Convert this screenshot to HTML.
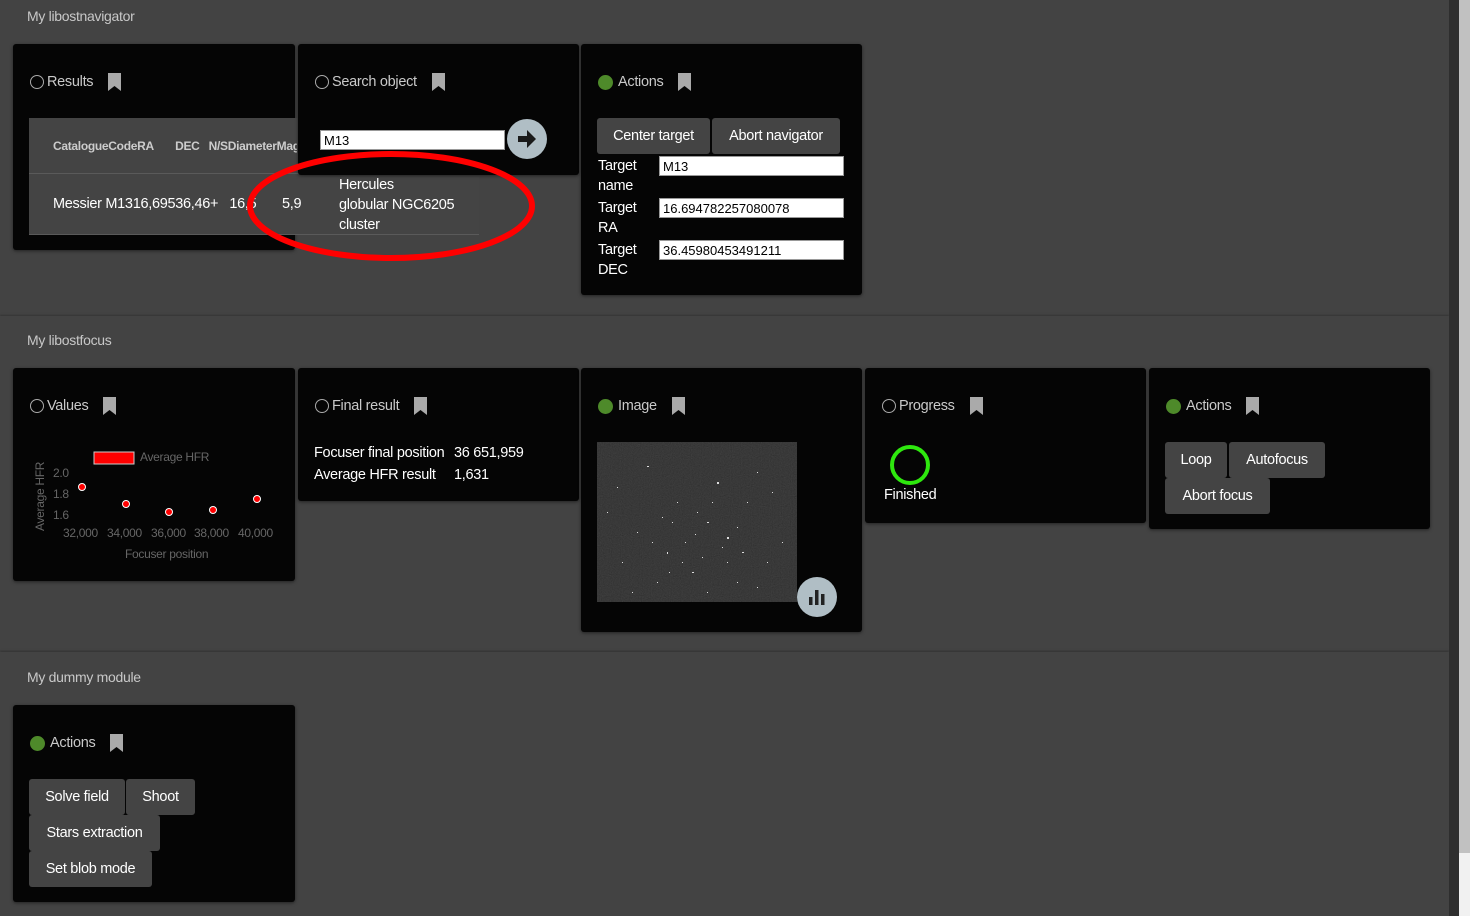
<!DOCTYPE html>
<html><head><meta charset="utf-8">
<style>
*{box-sizing:border-box;margin:0;padding:0}
html,body{width:1470px;height:916px;overflow:hidden;background:#434343;font-family:"Liberation Sans",sans-serif;color:#fff;letter-spacing:-0.3px}
.abs{position:absolute}
.sec{position:absolute;left:0;width:1449px;background:#434343}
.strip{position:absolute;left:1449px;top:0;width:10px;height:916px;background:#2e2e2e}
.sbt{position:absolute;left:1459px;top:0;width:11px;height:916px;background:#f1f1f1}
.sb{position:absolute;left:1459px;top:0;width:11px;height:853px;background:#c1c1c1}
.title{position:absolute;left:27px;font-size:14px;color:#c8c8c8}
.card{position:absolute;background:#050505;border-radius:3px;box-shadow:0 1px 3px rgba(0,0,0,.5)}
.hd{position:absolute;left:17px;top:30px;height:16px;display:flex;align-items:center;font-size:14.5px;color:#c9c9c9}
.dot{width:14px;height:14px;border-radius:50%;border:1px solid #aaa;margin-right:3px}
.dot.g{background:#4e8a2a;border-color:#4e8a2a;width:15px;height:15px;margin-right:5px}
.bm{margin-left:14px;width:15px;height:18px}
.btn{position:absolute;background:#444;border-radius:3px;font-size:14.5px;color:#fff;height:36px;line-height:37px;text-align:center;font-weight:500}
input{position:absolute;background:#fff;border:1px solid #999;font-family:"Liberation Sans",sans-serif;font-size:13px;color:#000;padding-left:3px;height:20px}
.lbl{position:absolute;font-size:14.5px;line-height:20px;color:#fff}
</style></head><body>
<div class="sec" style="top:0;height:314px"></div>
<div class="sec" style="top:316px;height:334px;box-shadow:0 -1px 2px rgba(0,0,0,.25)"></div>
<div class="sec" style="top:652px;height:264px;box-shadow:0 -1px 2px rgba(0,0,0,.25)"></div>
<div class="strip"></div><div class="sbt"></div><div class="sb"></div>

<div class="title" style="top:8px">My libostnavigator</div>
<div class="title" style="top:332px">My libostfocus</div>
<div class="title" style="top:669px">My dummy module</div>

<svg width="0" height="0" style="position:absolute"><defs><symbol id="bm" viewBox="0 0 15 18"><path d="M1 0H14V18L7.5 13L1 18Z" fill="#aaa"/></symbol></defs></svg>

<!-- Results -->
<div class="card" style="left:13px;top:44px;width:282px;height:206px">
 <div class="hd"><div class="dot"></div>Results<svg class="bm"><use href="#bm"/></svg></div>
</div>
<div class="abs" style="left:29px;top:118px;width:450px;height:117px;background:#444;border-bottom:1px solid #5a5a5a"></div>
<div class="abs" style="left:29px;top:173px;width:450px;height:1px;background:#5a5a5a"></div>
<div class="abs" style="left:53px;top:139px;font-size:12px;color:#ccc;font-weight:bold;white-space:nowrap;width:244px;overflow:hidden">CatalogueCodeRA&nbsp;&nbsp;&nbsp;&nbsp;&nbsp;&nbsp;&nbsp;DEC&nbsp;&nbsp;&nbsp;N/SDiameterMagnitude</div>
<div class="abs" style="left:53px;top:196px;font-size:14.5px">Messier M1316,69536,46+&nbsp;&nbsp;&nbsp;16,5</div>
<div class="abs" style="left:282px;top:196px;font-size:14.5px">5,9</div>
<div class="abs" style="left:339px;top:175px;font-size:14.5px;line-height:20px">Hercules<br>globular NGC6205<br>cluster</div>

<!-- Search -->
<div class="card" style="left:298px;top:44px;width:281px;height:131px">
 <div class="hd"><div class="dot"></div>Search object<svg class="bm"><use href="#bm"/></svg></div>
 <input value="M13" style="left:22px;top:86px;width:185px">
 <svg class="abs" style="left:209px;top:75px" width="40" height="40"><circle cx="20" cy="20" r="20" fill="#b0bec5"/><path d="M11 17h9v-6l9 9-9 9v-6h-9z" fill="#1a1a1a"/></svg>
</div>
<svg class="abs" style="left:240px;top:145px" width="310" height="125"><ellipse cx="151" cy="61" rx="141" ry="52" fill="none" stroke="#f00" stroke-width="6"/></svg>

<!-- Actions nav -->
<div class="card" style="left:581px;top:44px;width:281px;height:251px">
 <div class="hd"><div class="dot g"></div>Actions<svg class="bm"><use href="#bm"/></svg></div>
 <div class="btn" style="left:16px;top:74px;width:113px">Center target</div>
 <div class="btn" style="left:131px;top:74px;width:128px">Abort navigator</div>
 <div class="lbl" style="left:17px;top:112px">Target<br>name</div>
 <div class="lbl" style="left:17px;top:154px">Target<br>RA</div>
 <div class="lbl" style="left:17px;top:196px">Target<br>DEC</div>
 <input value="M13" style="left:78px;top:112px;width:185px">
 <input value="16.694782257080078" style="left:78px;top:154px;width:185px">
 <input value="36.45980453491211" style="left:78px;top:196px;width:185px">
</div>

<!-- Values -->
<div class="card" style="left:13px;top:368px;width:282px;height:213px">
 <div class="hd"><div class="dot"></div>Values<svg class="bm"><use href="#bm"/></svg></div>
 <svg class="abs" style="left:0;top:62px" width="282" height="140" font-family="Liberation Sans" font-size="12" fill="#666">
  <rect x="81" y="22" width="40" height="12" fill="#f00" stroke="#ccc" stroke-width="1"/>
  <text x="127" y="31">Average HFR</text>
  <text x="40" y="47">2.0</text><text x="40" y="68">1.8</text><text x="40" y="89">1.6</text>
  <text transform="translate(31,101) rotate(-90)">Average HFR</text>
  <text x="50" y="107">32,000</text><text x="94" y="107">34,000</text><text x="138" y="107">36,000</text><text x="181" y="107">38,000</text><text x="225" y="107">40,000</text>
  <text x="112" y="128">Focuser position</text>
  <g fill="#f00" stroke="#fff" stroke-width="1"><circle cx="69" cy="57" r="3.5"/><circle cx="113" cy="74" r="3.5"/><circle cx="156" cy="82" r="3.5"/><circle cx="200" cy="80" r="3.5"/><circle cx="244" cy="69" r="3.5"/></g>
 </svg>
</div>

<!-- Final result -->
<div class="card" style="left:298px;top:368px;width:281px;height:133px">
 <div class="hd"><div class="dot"></div>Final result<svg class="bm"><use href="#bm"/></svg></div>
 <div class="lbl" style="left:16px;top:75px">Focuser final position</div>
 <div class="lbl" style="left:156px;top:75px">36 651,959</div>
 <div class="lbl" style="left:16px;top:97px">Average HFR result</div>
 <div class="lbl" style="left:156px;top:97px">1,631</div>
</div>

<!-- Image -->
<div class="card" style="left:581px;top:368px;width:281px;height:264px">
 <div class="hd"><div class="dot g"></div>Image<svg class="bm"><use href="#bm"/></svg></div>
 <svg class="abs" style="left:16px;top:74px" width="200" height="160">
  <filter id="n" color-interpolation-filters="sRGB"><feTurbulence type="fractalNoise" baseFrequency="0.9" numOctaves="1" seed="3"/><feColorMatrix type="matrix" values="0.33 0.33 0.33 0 0  0.33 0.33 0.33 0 0  0.33 0.33 0.33 0 0  0 0 0 0 1"/><feComponentTransfer><feFuncR type="linear" slope="0.3" intercept="0.08"/><feFuncG type="linear" slope="0.3" intercept="0.08"/><feFuncB type="linear" slope="0.3" intercept="0.08"/></feComponentTransfer></filter>
  <rect width="200" height="160" fill="#383838"/>
  <rect width="200" height="160" filter="url(#n)" opacity="0.5"/>
  <g fill="#ddd">
   <rect x="50" y="24" width="2" height="1"/><rect x="120" y="40" width="2" height="2"/><rect x="80" y="60" width="1" height="1"/><rect x="110" y="80" width="2" height="1"/><rect x="70" y="110" width="1" height="2"/><rect x="130" y="95" width="2" height="2"/><rect x="40" y="90" width="1" height="1"/><rect x="150" y="60" width="1" height="1"/><rect x="95" y="130" width="2" height="1"/><rect x="60" y="140" width="1" height="1"/><rect x="170" y="120" width="1" height="1"/><rect x="25" y="120" width="1" height="1"/><rect x="140" y="140" width="1" height="1"/><rect x="105" y="115" width="1" height="1"/><rect x="88" y="100" width="1" height="1"/><rect x="160" y="30" width="1" height="1"/><rect x="20" y="45" width="1" height="1"/><rect x="130" y="120" width="1" height="1"/><rect x="75" y="80" width="1" height="1"/><rect x="115" y="60" width="1" height="1"/>
   <rect x="65" y="75" width="1" height="1"/><rect x="98" y="92" width="1" height="1"/><rect x="125" y="105" width="1" height="1"/><rect x="140" y="85" width="1" height="1"/><rect x="85" y="120" width="1" height="1"/><rect x="55" y="100" width="1" height="1"/><rect x="175" y="50" width="1" height="1"/><rect x="10" y="70" width="1" height="1"/><rect x="185" y="100" width="1" height="1"/><rect x="35" y="150" width="1" height="1"/><rect x="110" y="150" width="1" height="1"/><rect x="160" y="145" width="1" height="1"/><rect x="145" y="110" width="2" height="1"/><rect x="100" y="70" width="1" height="1"/><rect x="72" y="130" width="1" height="1"/>
  </g>
 </svg>
 <svg class="abs" style="left:216px;top:209px" width="40" height="40"><circle cx="20" cy="20" r="20" fill="#b0bec5"/><rect x="12" y="20" width="3.5" height="8" fill="#222"/><rect x="18" y="13" width="3.5" height="15" fill="#222"/><rect x="24" y="17" width="3.5" height="11" fill="#222"/></svg>
</div>

<!-- Progress -->
<div class="card" style="left:865px;top:368px;width:281px;height:155px">
 <div class="hd"><div class="dot"></div>Progress<svg class="bm"><use href="#bm"/></svg></div>
 <div class="abs" style="left:25px;top:77px;width:40px;height:40px;border:4px solid #2ee80e;border-radius:50%"></div>
 <div class="lbl" style="left:19px;top:117px">Finished</div>
</div>

<!-- Actions focus -->
<div class="card" style="left:1149px;top:368px;width:281px;height:161px">
 <div class="hd"><div class="dot g"></div>Actions<svg class="bm"><use href="#bm"/></svg></div>
 <div class="btn" style="left:16px;top:74px;width:62px">Loop</div>
 <div class="btn" style="left:80px;top:74px;width:96px">Autofocus</div>
 <div class="btn" style="left:16px;top:110px;width:105px">Abort focus</div>
</div>

<!-- Dummy -->
<div class="card" style="left:13px;top:705px;width:282px;height:197px">
 <div class="hd"><div class="dot g"></div>Actions<svg class="bm"><use href="#bm"/></svg></div>
 <div class="btn" style="left:16px;top:74px;width:96px">Solve field</div>
 <div class="btn" style="left:113px;top:74px;width:69px">Shoot</div>
 <div class="btn" style="left:16px;top:110px;width:131px">Stars extraction</div>
 <div class="btn" style="left:16px;top:146px;width:123px">Set blob mode</div>
</div>
</body></html>
